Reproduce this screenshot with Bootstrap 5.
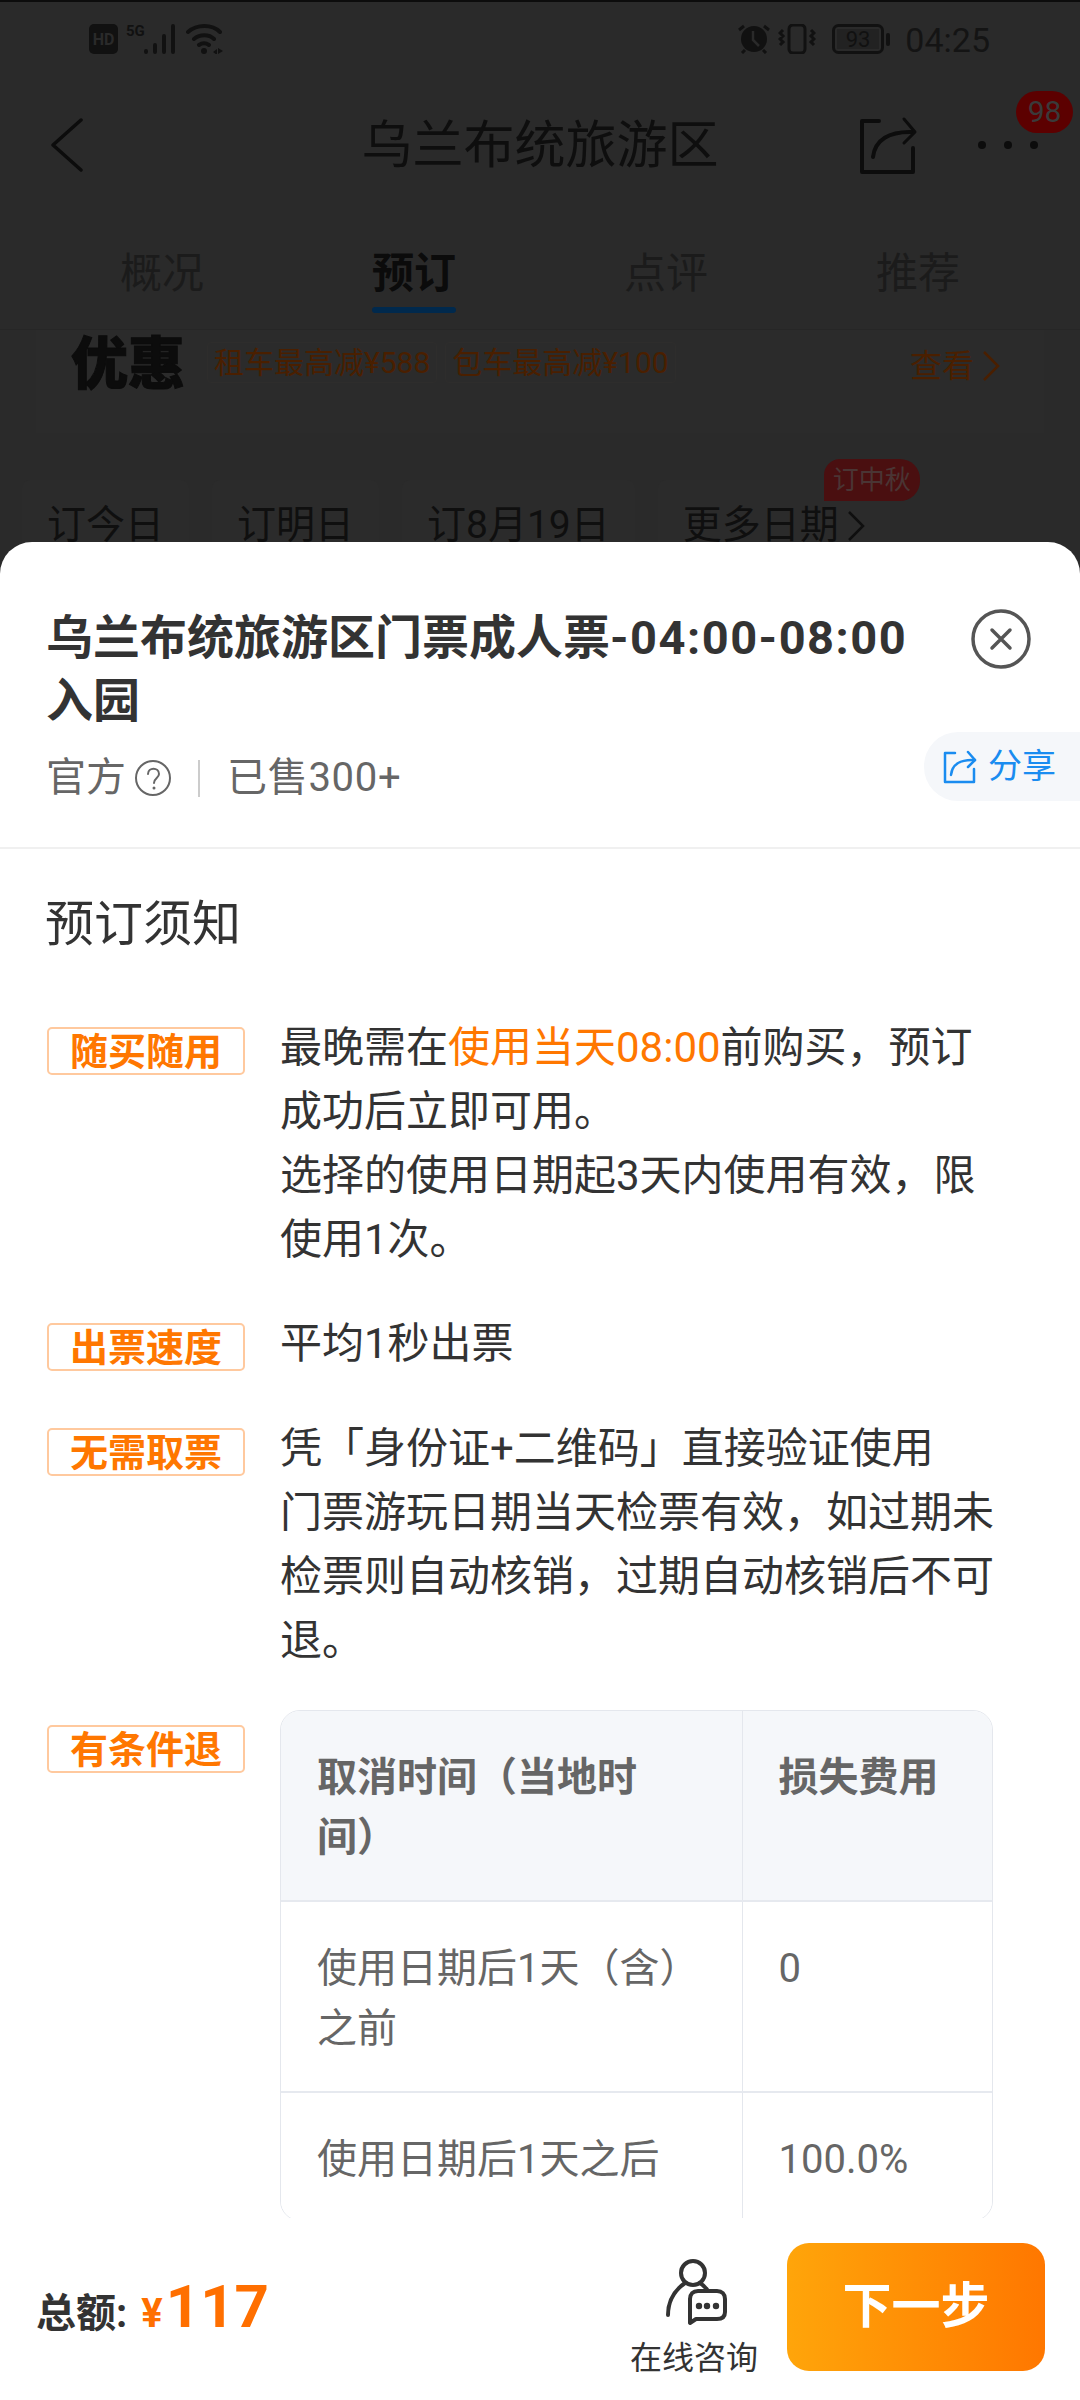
<!DOCTYPE html>
<html lang="zh-CN">
<head>
    <meta charset="UTF-8">
    <meta name="viewport" content="width=device-width, initial-scale=1.0">
    <title>乌兰布统旅游区</title>
    <link href="https://cdn.jsdelivr.net/npm/bootstrap@5.3.0/dist/css/bootstrap.min.css" rel="stylesheet">
    <style>
        html, body { margin: 0; height: 2400px; overflow: hidden; }
        body { background: #2a2a2a; font-family: Roboto, "Noto Sans CJK SC", sans-serif; color: #333; }

        /* dimmed page behind the sheet */
        .behind { height: 542px; overflow: hidden; border-top: 2px solid #0c0c0c; color: #0e0e0e; }
        .status-row { height: 78px; padding: 22px 90px 0 89px; }
        .status-time { font-size: 34px; line-height: 32px; color: #141414; margin-left: 15px; }
        .nav-row { height: 130px; padding: 0 42px 0 51px; position: relative; }
        .nav-title { position: absolute; left: 0; right: 0; top: 37px; text-align: center; font-size: 51px; line-height: 58px; }
        .nav-badge { position: absolute; left: 1016px; top: 11px; width: 57px; height: 42px; border-radius: 21px; background: #5c0000; color: #3a3a3a; font-size: 30px; line-height: 42px; text-align: center; }
        .tab-row { height: 120px; padding: 0 36px; border-bottom: 1px solid #262626; }
        .tab-item { width: 252px; padding-top: 36px; text-align: center; font-size: 42px; line-height: 56px; color: #1b1b1b; }
        .tab-item.on { color: #0b0b0b; font-weight: 700; }
        .tab-bar { width: 84px; height: 6px; margin: 5px auto 0; border-radius: 3px; background: #00294d; }
        .promo-box { height: 103px; margin: 0 36px; padding: 12px 44px 0 35px; background: #2b2b2b; }
        .promo-name { width: 136px; font-size: 57px; line-height: 46px; font-weight: 900; color: #0c0c0c; -webkit-text-stroke: 1px #0c0c0c; white-space: nowrap; }
        .promo-tag { height: 41px; padding: 0 6px; margin-right: 8px; border: 1px solid #2e2d2c; border-radius: 4px; font-size: 30px; line-height: 39px; color: #4a1f00; }
        .promo-more { font-size: 32px; line-height: 48px; color: #4a1f00; }
        .chip-row { margin-top: 47px; padding-left: 22px; gap: 23px; }
        .date-chip { position: relative; height: 90px; padding: 22px 25px 0; border-radius: 8px; background: #2b2b2b; font-size: 39px; line-height: 46px; color: #0f0f0f; white-space: nowrap; }
        .chip-flag { position: absolute; left: 166px; top: -21px; width: 96px; height: 42px; border-radius: 16px 20px 20px 0; background: #4a0f10; color: #4a3534; font-size: 26px; line-height: 42px; text-align: center; }

        /* bottom sheet */
        .sheet { position: relative; height: 1858px; background: #fff; border-radius: 32px 32px 0 0; }
        .sheet-head { height: 307px; padding: 64px 49px 0 46px; border-bottom: 2px solid #f0f0f0; }
        .sheet-title { width: 874px; font-size: 47px; line-height: 63px; font-weight: 700; color: #333; }
        .title-nums { letter-spacing: 1.5px; }
        .sheet-close { margin-left: auto; margin-top: 3px; }
        .sheet-sub { margin-top: 18px; font-size: 40px; line-height: 56px; color: #666; }
        .sub-sep { width: 2px; height: 37px; margin: 0 27px 0 26px; background: #ccc; }
        .sold-count { letter-spacing: .7px; }
        .share-pill { position: absolute; right: 0; top: 190px; width: 156px; height: 69px; padding-left: 19px; gap: 11px; background: #f5f7fa; border-radius: 34px 0 0 34px; font-size: 34px; color: #1a8cf0; }
        .notice-wrap { height: 1369px; overflow: hidden; padding: 44px 0 0 47px; }
        .notice-title { margin: 0 0 59px -2px; font-size: 49px; line-height: 64px; font-weight: 400; color: #333; }
        .rule-row { margin-bottom: 40px; }
        .rule-row.gap-wide { margin-bottom: 41px; }
        .rule-row.gap-thin { margin-bottom: 37px; }
        .rule-tag { width: 198px; height: 48px; margin: 11px 35px 0 0; flex: none; border: 2px solid #ffc99e; border-radius: 5px; color: #ff7700; font-size: 38px; line-height: 46px; font-weight: 700; text-align: center; }
        .rule-text { width: 718px; font-size: 42px; line-height: 64px; color: #333; }
        .hl-orange { color: #ff7700; }
        .table-rule .rule-tag { margin-top: 15px; }
        .fee-wrap { width: 713px; border: 1px solid #e4e7ed; border-radius: 20px; overflow: hidden; }
        .fee-table { width: 100%; margin: 0; table-layout: fixed; border-collapse: collapse; font-size: 40px; line-height: 60px; color: #666; }
        .fee-table th, .fee-table td { padding: 37px 36px 32px; vertical-align: top; background: #fff; color: #666; border: 0; border-bottom: 2px solid #e6e9ef; box-shadow: none; }
        .fee-table th { background: #f5f7fa; font-weight: 700; }
        .fee-table th:first-child, .fee-table td:first-child { width: 461px; border-right: 1px solid #e4e7ed; }
        .fee-table tr:last-child td { border-bottom: 0; padding-bottom: 30px; }

        /* footer */
        .foot-bar { height: 182px; padding: 25px 35px 0 36px; background: #fff; }
        .foot-total { margin-top: 34px; font-size: 40px; line-height: 60px; font-weight: 700; color: #333; }
        .foot-yen { margin-left: 14px; font-size: 40px; color: #ff6f00; }
        .foot-price { font-size: 60px; font-weight: 700; color: #ff6f00; margin-left: 3px; }
        .foot-help { width: 126px; margin-left: auto; padding-top: 16px; text-align: center; font-size: 32px; line-height: 40px; color: #333; white-space: nowrap; }
        .foot-help svg { display: block; margin: 0 0 12px 36px; }
        .foot-next { width: 258px; height: 128px; margin-left: 31px; border: 0; border-radius: 22px; background: linear-gradient(90deg, #ffa50a, #ff7700); color: #fff; font-size: 49px; font-weight: 700; }
        .dots-icon { margin-left: 59px; }
    </style>
</head>
<body>
    <div class="behind">
        <div class="status-row d-flex align-items-start">
            <svg width="29" height="30" viewBox="0 0 29 30"><rect width="29" height="30" rx="5" fill="#111"/><text x="14.5" y="21" font-family="Roboto" font-size="16" font-weight="700" fill="#2a2a2a" text-anchor="middle">HD</text></svg>
            <svg class="ms-2" width="52" height="30" viewBox="0 0 52 30"><text x="0" y="12" font-family="Roboto" font-size="15" font-weight="700" fill="#111">5G</text><g stroke="#111" stroke-width="4" stroke-linecap="round"><path d="M20 27v1M29 21v7M38 12v16M47 2v26"/></g></svg>
            <svg class="ms-2" width="38" height="30" viewBox="0 0 38 30" fill="none" stroke="#111" stroke-width="4" stroke-linecap="round"><path d="M2 8c9-8 24-8 32 0M8 15c6-5 15-5 20 0M13 21c3-2 7-2 10 0"/><circle cx="18" cy="27" r="3" fill="#111" stroke="none"/><path d="M27 28l4-3v6zM32 24l5 3-5 3z" fill="#111" stroke="none"/></svg>
            <div class="ms-auto d-flex align-items-start">
                <svg width="32" height="30" viewBox="0 0 32 30"><circle cx="16" cy="15" r="13" fill="#111"/><path d="M15 7v9l6 6" fill="none" stroke="#2a2a2a" stroke-width="2.5"/><path d="M1 6l5-4M31 6l-5-4M4 29l3-3M28 29l-3-3" stroke="#111" stroke-width="3"/></svg>
                <svg class="ms-2" width="38" height="30" viewBox="0 0 38 30" fill="none" stroke="#111" stroke-width="3"><rect x="11" y="1" width="16" height="28" rx="4"/><path d="M5 6l-3 3 3 3-3 3 3 3-3 3M33 6l3 3-3 3 3 3-3 3 3 3"/></svg>
                <svg class="ms-3" width="58" height="30" viewBox="0 0 58 30"><rect x="1.5" y="1.5" width="49" height="27" rx="5" fill="none" stroke="#111" stroke-width="3"/><rect x="5" y="5" width="42" height="20" fill="#222"/><text x="26" y="23" font-family="Roboto" font-size="22" fill="#111" text-anchor="middle">93</text><rect x="54" y="9" width="4" height="13" rx="2" fill="#111"/></svg>
                <span class="status-time">04:25</span>
            </div>
        </div>
        <div class="nav-row d-flex align-items-center">
            <svg width="32" height="54" viewBox="0 0 32 54" fill="none" stroke="#0c0c0c" stroke-width="3.5" stroke-linecap="round" stroke-linejoin="round"><path d="M30 2L2 27l28 25"/></svg>
            <div class="nav-title">乌兰布统旅游区</div>
            <svg class="ms-auto" width="60" height="60" viewBox="0 0 60 60" fill="none" stroke="#0c0c0c" stroke-width="4" stroke-linecap="round" stroke-linejoin="round"><path d="M20 6H3v51h51V33"/><path d="M14 42c2-17 16-26 40-25"/><path d="M45 4l11 13-11 11" stroke-width="3"/></svg>
            <svg class="dots-icon" width="60" height="10" viewBox="0 0 60 10" fill="#0c0c0c"><circle cx="4" cy="5" r="4"/><circle cx="30" cy="5" r="4"/><circle cx="56" cy="5" r="4"/></svg>
            <div class="nav-badge">98</div>
        </div>
        <div class="tab-row d-flex">
            <div class="tab-item">概况</div>
            <div class="tab-item on">预订<div class="tab-bar"></div></div>
            <div class="tab-item">点评</div>
            <div class="tab-item">推荐</div>
        </div>
        <div class="promo-box d-flex align-items-start">
            <div class="promo-name">优惠</div>
            <div class="promo-tag">租车最高减¥588</div>
            <div class="promo-tag">包车最高减¥100</div>
            <div class="promo-more ms-auto d-flex align-items-center gap-2">查看
                <svg width="18" height="32" viewBox="0 0 18 32" fill="none" stroke="#4a1f00" stroke-width="2.5"><path d="M2 2l14 14L2 30"/></svg>
            </div>
        </div>
        <div class="chip-row d-flex">
            <div class="date-chip">订今日</div>
            <div class="date-chip">订明日</div>
            <div class="date-chip">订8月19日</div>
            <div class="date-chip d-flex align-items-start gap-2">更多日期
                <svg class="mt-2" width="18" height="32" viewBox="0 0 18 32" fill="none" stroke="#0f0f0f" stroke-width="2.5"><path d="M2 2l14 14L2 30"/></svg>
                <div class="chip-flag">订中秋</div>
            </div>
        </div>
    </div>

    <div class="sheet">
        <div class="sheet-head">
            <div class="d-flex align-items-start">
                <div class="sheet-title">乌兰布统旅游区门票成人票<span class="title-nums">-04:00-08:00</span><br>入园</div>
                <svg class="sheet-close" width="60" height="60" viewBox="0 0 60 60" fill="none" stroke="#555" stroke-linecap="round"><circle cx="30" cy="30" r="28" stroke-width="3.5"/><path d="M21 21l18 18M39 21L21 39" stroke-width="3.5"/></svg>
            </div>
            <div class="sheet-sub d-flex align-items-center">
                <span>官方</span>
                <svg class="ms-2" width="38" height="38" viewBox="0 0 38 38" fill="none" stroke="#666" stroke-width="2"><circle cx="19" cy="19" r="17"/><path d="M14 15c0-7 11-7 11 0 0 4-5 4-5 9" stroke-linecap="round"/><circle cx="20" cy="29" r="1.5" fill="#666" stroke="none"/></svg>
                <span class="sub-sep"></span>
                <span class="sold-count">已售300+</span>
            </div>
        </div>
        <div class="share-pill d-flex align-items-center">
            <svg width="34" height="34" viewBox="0 0 34 34" fill="none" stroke="#1a8cf0" stroke-width="2.5" stroke-linecap="round" stroke-linejoin="round"><path d="M12 3H2v29h29V19"/><path d="M8 25c1-10 9-16 24-15"/><path d="M25 2l7 8-7 7"/></svg>
            <span>分享</span>
        </div>

        <div class="notice-wrap">
            <h2 class="notice-title">预订须知</h2>
            <div class="rule-row d-flex align-items-start">
                <div class="rule-tag">随买随用</div>
                <div class="rule-text">最晚需在<span class="hl-orange">使用当天08:00</span>前购买，预订成功后立即可用。<br>选择的使用日期起3天内使用有效，限使用1次。</div>
            </div>
            <div class="rule-row gap-wide d-flex align-items-start">
                <div class="rule-tag">出票速度</div>
                <div class="rule-text">平均1秒出票</div>
            </div>
            <div class="rule-row gap-thin d-flex align-items-start">
                <div class="rule-tag">无需取票</div>
                <div class="rule-text">凭「身份证+二维码」直接验证使用<br>门票游玩日期当天检票有效，如过期未检票则自动核销，过期自动核销后不可退。</div>
            </div>
            <div class="rule-row table-rule d-flex align-items-start">
                <div class="rule-tag">有条件退</div>
                <div class="fee-wrap">
                    <table class="table fee-table">
                        <thead>
                            <tr><th>取消时间（当地时<br>间）</th><th>损失费用</th></tr>
                        </thead>
                        <tbody>
                            <tr><td>使用日期后1天（含）之前</td><td>0</td></tr>
                            <tr><td>使用日期后1天之后</td><td>100.0%</td></tr>
                        </tbody>
                    </table>
                </div>
            </div>
        </div>

        <div class="foot-bar d-flex align-items-start">
            <div class="foot-total">总额:<span class="foot-yen">¥</span><span class="foot-price">117</span></div>
            <div class="foot-help">
                <svg width="62" height="67" viewBox="0 0 62 67" fill="none" stroke="#333" stroke-width="4" stroke-linecap="round" stroke-linejoin="round"><circle cx="27" cy="14" r="12"/><path d="M19 24C9 31 2 42 2 56"/><path d="M34 24c3 2 6 5 8 8"/><path d="M24 64V40c0-5 3-8 8-8h19c5 0 8 3 8 8v13c0 5-3 7-8 7H30z"/><circle cx="33" cy="47" r="1.2" fill="#333"/><circle cx="41" cy="47" r="1.2" fill="#333"/><circle cx="50" cy="47" r="1.2" fill="#333"/></svg>
                在线咨询
            </div>
            <button class="btn foot-next" type="button">下一步</button>
        </div>
    </div>
    <script src="https://cdn.jsdelivr.net/npm/bootstrap@5.3.0/dist/js/bootstrap.bundle.min.js"></script>
</body>
</html>
